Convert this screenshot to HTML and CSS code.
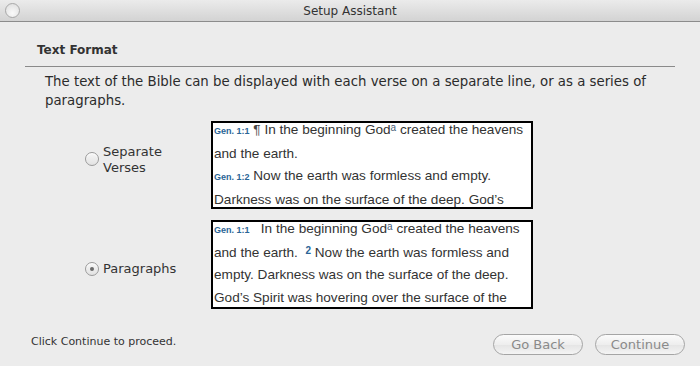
FILE: index.html
```html
<!DOCTYPE html>
<html>
<head>
<meta charset="utf-8">
<link rel="stylesheet" href="styles.css">
</head>
<body>
<div class="window">
  <div class="titlebar">
    <span class="close"></span>
    <span class="title">Setup Assistant</span>
  </div>
  <div class="content">
    <h2 class="section">Text Format</h2>
    <p class="intro">The text of the Bible can be displayed with each verse on a separate line, or as a series of paragraphs.</p>

    <div class="options">
      <label class="choice choice-top">
        <span class="radio"></span>
        <span class="choice-label">Separate<br>Verses</span>
      </label>
      <div class="preview">
        <div class="verses">
          <span class="ref">Gen. 1:1</span> <span class="pilcrow">¶</span> In the beginning God<sup>a</sup> created the heavens and the earth.<br>
          <span class="ref">Gen. 1:2</span> Now the earth was formless and empty. Darkness was on the surface of the deep. God’s Spirit was hovering over the surface of the waters.
        </div>
      </div>

      <label class="choice choice-bottom">
        <span class="radio checked"></span>
        <span class="choice-label">Paragraphs</span>
      </label>
      <div class="preview">
        <div class="verses">
          <span class="ref">Gen. 1:1</span>&nbsp;&nbsp; In the beginning God<sup>a</sup> created the heavens and the earth. &nbsp;<sup class="num">2</sup> Now the earth was formless and empty. Darkness was on the surface of the deep. God’s Spirit was hovering over the surface of the waters.
        </div>
      </div>
    </div>
  </div>
  <div class="footer">
    <span class="hint">Click Continue to proceed.</span>
    <div class="buttons">
      <button class="btn">Go Back</button>
      <button class="btn">Continue</button>
    </div>
  </div>
</div>
</body>
</html>
```

FILE: styles.css
```css
body {
  margin: 0;
  background: #ececec;
  font-family: "DejaVu Sans", sans-serif;
  color: #2b2b2b;
}

.window {
  width: 700px;
  height: 366px;
  display: flex;
  flex-direction: column;
}

.titlebar {
  height: 21px;
  border-bottom: 1px solid #8c8c8c;
  background: linear-gradient(#ebebeb, #d3d3d3);
  display: flex;
  align-items: center;
  justify-content: center;
  position: relative;
}

.close {
  position: absolute;
  left: 5px;
  top: 3px;
  width: 13px;
  height: 13px;
  border-radius: 50%;
  border: 1px solid #a8a8a8;
  background: radial-gradient(circle at 50% 70%, #fafafa, #dcdcdc);
}

.title {
  font-size: 12px;
  color: #333;
}

.content {
  padding: 0 25px;
}

.section {
  margin: 21px 0 0;
  padding: 0 0 9px 12px;
  font-size: 12px;
  font-weight: bold;
  color: #333;
  border-bottom: 1px solid #8a8a8a;
}

.intro {
  margin: 5px 0 0 20px;
  font-size: 13.3px;
  line-height: 19px;
  color: #2b2b2b;
}

.options {
  display: grid;
  grid-template-columns: 186px 322px;
  grid-template-rows: 88px 89px;
  row-gap: 11px;
  margin-top: 11px;
}

.choice {
  display: flex;
  align-items: center;
  padding-left: 60px;
  gap: 4px;
  font-size: 13px;
  line-height: 16px;
  color: #333;
}

.choice-top {
  padding-bottom: 14px;
}

.choice-top .choice-label {
  margin-top: 3px;
}

.choice-bottom {
  padding-top: 8px;
}

.radio {
  width: 12px;
  height: 12px;
  border-radius: 50%;
  border: 1px solid #9a9a9a;
  background: linear-gradient(#f6f6f6, #e2e2e2);
  box-shadow: inset 0 1px 1px #fff;
  flex: none;
  position: relative;
  margin-top: 1px;
}

.radio.checked::after {
  content: "";
  position: absolute;
  left: 4px;
  top: 4px;
  width: 4px;
  height: 4px;
  border-radius: 50%;
  background: #6a6a6a;
}

.preview {
  border: 2px solid #000;
  background: #fff;
  padding: 0 0 0 1px;
  font-family: "Liberation Sans", Arial, sans-serif;
  font-size: 13.6px;
  color: #333;
  overflow: hidden;
}

.verses {
  line-height: 22.7px;
  margin-top: -4px;
}

.ref {
  font-size: 9px;
  font-weight: bold;
  color: #2a6496;
}

.pilcrow {
  color: #444;
}

sup {
  font-size: 10px;
  line-height: 0;
  vertical-align: 3px;
  color: #4a6078;
}

sup.num {
  font-weight: bold;
  color: #2a6496;
}

.footer {
  margin-top: auto;
  height: 44px;
  display: flex;
  align-items: center;
  justify-content: space-between;
  padding: 0 15px 1px 31px;
}

.hint {
  font-size: 11px;
  color: #333;
  margin-top: -4px;
}

.buttons {
  display: flex;
  gap: 12px;
  margin-top: 2px;
}

.btn {
  width: 90px;
  height: 21px;
  border-radius: 11px;
  border: 1px solid #a5a5a5;
  background: linear-gradient(#fbfbfb, #eeeeee 50%, #e4e4e4 51%, #f4f4f4);
  font-family: "DejaVu Sans", sans-serif;
  font-size: 13px;
  color: #8a8a8a;
  padding: 0;
}
```
